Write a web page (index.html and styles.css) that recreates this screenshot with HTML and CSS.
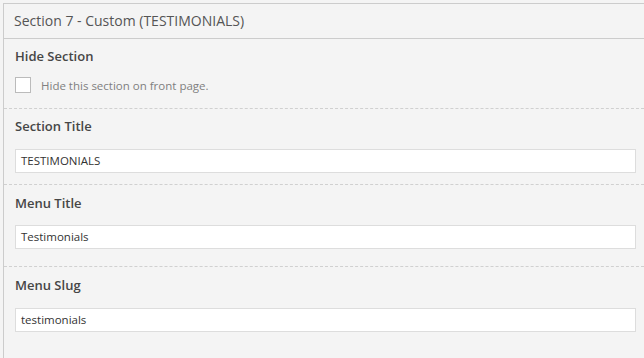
FILE: index.html
```html
<!DOCTYPE html>
<html>
<head>
<meta charset="utf-8">
<link rel="stylesheet" href="styles.css">
</head>
<body>
<div class="panel">
  <div class="panel-head">Section 7 - Custom (TESTIMONIALS)</div>
  <div class="field field-hide">
    <div class="label">Hide Section</div>
    <label class="check-row"><span class="checkbox"></span><span class="check-text">Hide this section on front page.</span></label>
  </div>
  <div class="field field-title">
    <div class="label">Section Title</div>
    <div class="input">TESTIMONIALS</div>
  </div>
  <div class="field field-menu">
    <div class="label">Menu Title</div>
    <div class="input">Testimonials</div>
  </div>
  <div class="field field-slug">
    <div class="label">Menu Slug</div>
    <div class="input">testimonials</div>
  </div>
</div>
</body>
</html>
```
FILE: styles.css
```css
html, body {
  margin: 0;
  padding: 0;
  background: #f4f4f4;
}
body {
  font-family: "Open Sans", "Noto Sans", sans-serif;
  color: #444;
}
.panel {
  margin: 3px 0 0 3px;
  box-sizing: border-box;
  width: calc(100vw - 3px);
  height: calc(100vh - 3px);
  border-top: 1px solid #cccccc;
  border-left: 1px solid #cccccc;
  background: #f4f4f4;
}
.panel-head {
  height: 34px;
  line-height: 34px;
  padding-left: 10px;
  font-size: 14px;
  color: #555;
  border-bottom: 1px solid #cccccc;
}
.field {
  padding-left: 11px;
  border-bottom: 1px dashed #d0d0d0;
  box-sizing: border-box;
}
.label {
  font-size: 13px;
  font-weight: 600;
  color: #464646;
  height: 20px;
  line-height: 20px;
}
.field-hide { height: 70px; padding-top: 7px; }
.field-title { height: 76px; padding-top: 7px; }
.field-menu { height: 82px; padding-top: 8px; }
.field-slug { border-bottom: none; padding-top: 8px; }
.check-row {
  display: flex;
  align-items: center;
  margin-top: 11px;
  height: 16px;
}
.checkbox {
  width: 14px;
  height: 14px;
  border: 1px solid #bbbbbb;
  background: #fff;
  flex: none;
}
.check-text {
  margin-left: 10px;
  font-size: 11.5px;
  color: #808080;
}
.input {
  margin-top: 13px;
  height: 22px;
  line-height: 22px;
  border: 1px solid #dddddd;
  background: #fff;
  padding-left: 5px;
  width: 614px;
  font-size: 11.5px;
  color: #333;
}
.field-menu .input { margin-top: 12px; }
.field-slug .input { margin-top: 13px; }
```
